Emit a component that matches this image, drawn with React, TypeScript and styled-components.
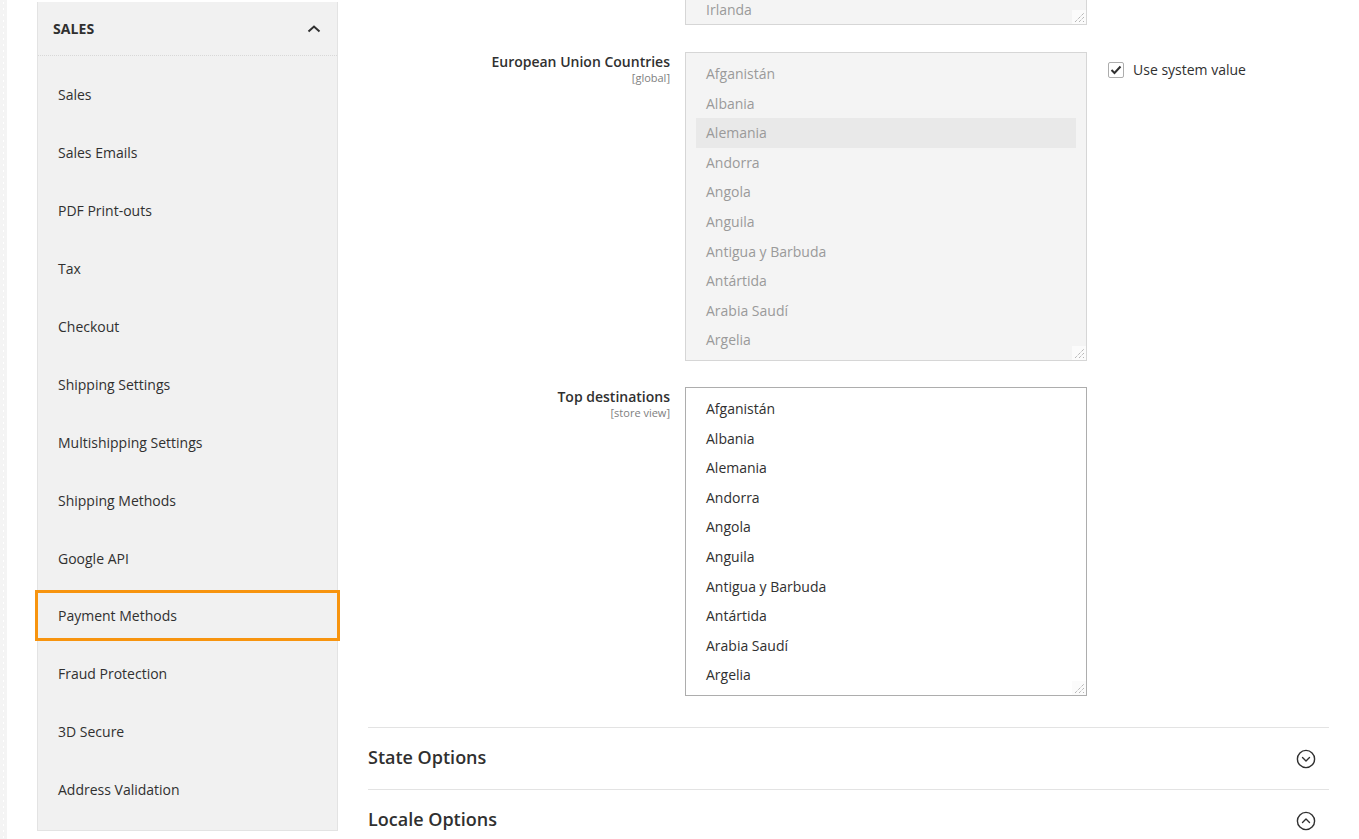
import React from "react";
import styled, { createGlobalStyle } from "styled-components";

const Global = createGlobalStyle`
  html, body { margin: 0; padding: 0; background: #fff; overflow: hidden; }
  body { font-family: "Open Sans", "Noto Sans", sans-serif; color: #303030; }
  * { box-sizing: border-box; }
`;

const Page = styled.div`
  display: flex;
  width: 1359px;
  height: 839px;
  overflow: hidden;
`;

const Strip = styled.div`
  width: 7px;
  flex: none;
  background-color: #f4f4f4;
  background-image: radial-gradient(circle, #ffffff 0.8px, transparent 1px);
  background-size: 7px 6px;
`;

const SideCol = styled.div`
  width: 331px;
  flex: none;
  padding: 2px 0 0 30px;
`;

const Sidebar = styled.nav`
  background: #f1f1f1;
  border: 1px solid #e3e3e3;
  border-top: none;
  width: 301px;
`;

const SideHead = styled.div`
  display: flex;
  align-items: center;
  justify-content: space-between;
  height: 54px;
  padding: 0 16px 0 15px;
  border-bottom: 1px dotted #d8d8d8;
  font-size: 14px;
  font-weight: 700;
  letter-spacing: 0.1px;
`;

const SideList = styled.ul`
  list-style: none;
  margin: 0;
  padding: 10px 0 11px;
`;

const SideItem = styled.li<{ $highlight?: boolean }>`
  position: relative;
  height: 57.9px;
  display: flex;
  align-items: center;
  padding-left: 20px;
  font-size: 14px;
  color: #303030;
  &::after {
    content: "";
    display: ${(p) => (p.$highlight ? "block" : "none")};
    position: absolute;
    left: -3px;
    right: -3px;
    top: 3px;
    bottom: 4px;
    border: 3px solid #f7940f;
  }
`;

const Main = styled.main`
  flex: 1;
  padding: 0 30px 0 30px;
  display: flex;
  flex-direction: column;
  & > * { flex: none; }
`;

const FieldRow = styled.div<{ $mt?: number }>`
  display: grid;
  grid-template-columns: 302px 402px auto;
  column-gap: 15px;
  margin-top: ${(p) => p.$mt ?? 0}px;
`;

const Label = styled.div`
  text-align: right;
  padding-top: 1px;
  display: flex;
  flex-direction: column;
  align-items: flex-end;
`;

const LabelText = styled.span`
  font-size: 14px;
  font-weight: 600;
  line-height: 18px;
  color: #303030;
`;

const Scope = styled.span`
  font-size: 11px;
  line-height: 13px;
  color: #808080;
`;

const SelectBox = styled.div<{ $disabled?: boolean; $h: number; $top?: boolean }>`
  position: relative;
  height: ${(p) => p.$h}px;
  border: 1px solid ${(p) => (p.$disabled ? "#d6d6d6" : "#adadad")};
  border-top-style: ${(p) => (p.$top ? "solid" : "none")};
  background: ${(p) => (p.$disabled ? "#f4f4f4" : "#ffffff")};
  overflow: hidden;
  display: flex;
  flex-direction: column;
  justify-content: ${(p) => (p.$top ? "flex-start" : "flex-end")};
  padding: ${(p) => (p.$top ? "6px 10px 0 10px" : "0 10px 0 10px")};
`;

const Option = styled.div<{ $disabled?: boolean; $selected?: boolean; $last?: boolean }>`
  flex: none;
  height: 29.6px;
  line-height: 29.6px;
  padding-left: 10px;
  font-size: 14px;
  color: ${(p) => (p.$disabled ? "#9a9a9a" : "#303030")};
  background: ${(p) => (p.$selected ? "#e9e9e9" : "transparent")};
  margin-bottom: ${(p) => (p.$last ? "-1px" : "0")};
`;

const Grip = styled.svg`
  position: absolute;
  right: 0;
  bottom: 0;
  width: 14px;
  height: 14px;
`;

const UseDefault = styled.label`
  display: flex;
  align-items: center;
  gap: 9px;
  padding: 8px 0 0 6px;
  height: fit-content;
  font-size: 14px;
  color: #303030;
`;

const Check = styled.span`
  width: 16px;
  height: 16px;
  border: 1px solid #adadad;
  border-radius: 2px;
  background: #fff;
  display: flex;
  align-items: center;
  justify-content: center;
`;

const Section = styled.div<{ $first?: boolean }>`
  display: flex;
  align-items: center;
  justify-content: space-between;
  height: 62px;
  border-top: 1px solid #e3e3e3;
  padding: 0 13px 4px 0;
  margin-top: ${(p) => (p.$first ? "31px" : "0")};
`;

const SectionTitle = styled.h3`
  margin: 0;
  font-size: 18px;
  font-weight: 600;
  color: #303030;
  letter-spacing: 0;
`;

const IconWrap = styled.span`
  display: flex;
  margin-top: 4px;
`;

const countries = [
  "Afganistán",
  "Albania",
  "Alemania",
  "Andorra",
  "Angola",
  "Anguila",
  "Antigua y Barbuda",
  "Antártida",
  "Arabia Saudí",
  "Argelia",
];

const sideItems = [
  "Sales",
  "Sales Emails",
  "PDF Print-outs",
  "Tax",
  "Checkout",
  "Shipping Settings",
  "Multishipping Settings",
  "Shipping Methods",
  "Google API",
  "Payment Methods",
  "Fraud Protection",
  "3D Secure",
  "Address Validation",
];

const ResizeGrip = () => (
  <Grip viewBox="0 0 14 14">
    <rect x="0" y="0" width="14" height="14" fill="#fbfbfb" />
    <path d="M3 12 L12 3 M7 12 L12 7 M11 12 L12 11" stroke="#9a9a9a" strokeWidth="1" strokeDasharray="1 1" />
  </Grip>
);

const CircleChevron = ({ up }: { up?: boolean }) => (
  <svg width="20" height="20" viewBox="0 0 20 20">
    <circle cx="10" cy="10" r="8.6" fill="none" stroke="#303030" strokeWidth="1.4" />
    <path
      d={up ? "M6.5 11.5 L10 8 L13.5 11.5" : "M6.5 8.5 L10 12 L13.5 8.5"}
      fill="none"
      stroke="#303030"
      strokeWidth="1.4"
      strokeLinecap="round"
      strokeLinejoin="round"
    />
  </svg>
);

export default function App() {
  return (
    <Page>
      <Global />
      <Strip />
      <SideCol>
        <Sidebar>
          <SideHead>
            <span>SALES</span>
            <svg width="14" height="10" viewBox="0 0 14 10">
              <path d="M1.5 7.5 L7 2.5 L12.5 7.5" fill="none" stroke="#303030" strokeWidth="2" />
            </svg>
          </SideHead>
          <SideList>
            {sideItems.map((s) => (
              <SideItem key={s} $highlight={s === "Payment Methods"}>
                {s}
              </SideItem>
            ))}
          </SideList>
        </Sidebar>
      </SideCol>
      <Main>
        <FieldRow>
          <div />
          <SelectBox $disabled $h={25}>
            <Option $disabled $last>Irlanda</Option>
            <ResizeGrip />
          </SelectBox>
          <div />
        </FieldRow>
        <FieldRow $mt={27}>
          <Label>
            <LabelText>European Union Countries</LabelText>
            <Scope>[global]</Scope>
          </Label>
          <SelectBox $disabled $top $h={309}>
            {countries.map((c) => (
              <Option key={c} $disabled $selected={c === "Alemania"}>
                {c}
              </Option>
            ))}
            <ResizeGrip />
          </SelectBox>
          <UseDefault>
            <Check>
              <svg width="12" height="10" viewBox="0 0 12 10">
                <path d="M1.5 5 L4.5 8 L10.5 1.5" fill="none" stroke="#303030" strokeWidth="2" />
              </svg>
            </Check>
            Use system value
          </UseDefault>
        </FieldRow>
        <FieldRow $mt={26}>
          <Label>
            <LabelText>Top destinations</LabelText>
            <Scope>[store view]</Scope>
          </Label>
          <SelectBox $top $h={309}>
            {countries.map((c) => (
              <Option key={c}>{c}</Option>
            ))}
            <ResizeGrip />
          </SelectBox>
          <div />
        </FieldRow>
        <Section $first>
          <SectionTitle>State Options</SectionTitle>
          <IconWrap>
            <CircleChevron />
          </IconWrap>
        </Section>
        <Section>
          <SectionTitle>Locale Options</SectionTitle>
          <IconWrap>
            <CircleChevron up />
          </IconWrap>
        </Section>
      </Main>
    </Page>
  );
}
